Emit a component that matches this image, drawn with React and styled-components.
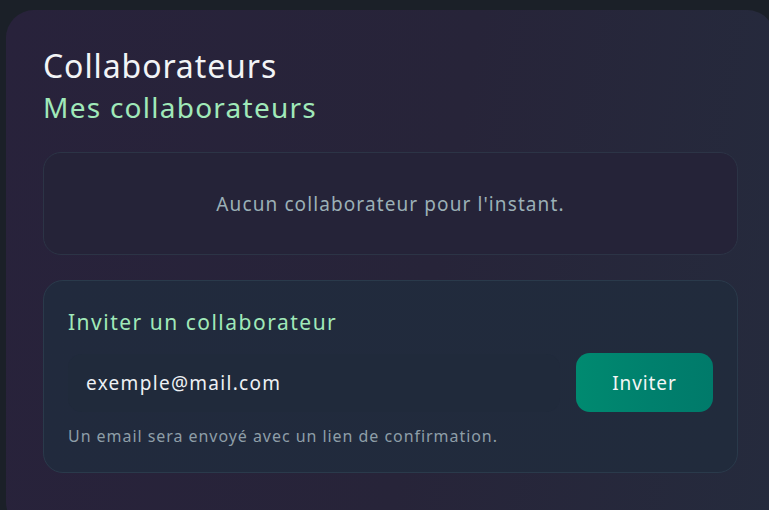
import React from "react";
import styled, { createGlobalStyle } from "styled-components";

const Global = createGlobalStyle`
  html, body { margin: 0; padding: 0; background: #1b2028; overflow: hidden; }
  body { font-family: "Noto Sans", "Open Sans", sans-serif; width: 769px; height: 510px; }
  * { box-sizing: border-box; }
`;

const Page = styled.div`
  padding: 10px 0 0 6px;
  width: 769px;
  height: 510px;
`;

const Card = styled.section`
  width: 769px;
  height: 520px;
  border-radius: 28px;
  background: linear-gradient(100deg, #28223b 0%, #272439 55%, #252b3d 100%);
  padding: 36px 37px 37px 37px;
  display: flex;
  flex-direction: column;
`;

const Title = styled.h1`
  margin: 0;
  font-weight: 400;
  font-size: 32px;
  line-height: 40px;
  color: #f2f4f6;
  letter-spacing: 0.9px;
`;

const Subtitle = styled.h2`
  margin: 3px 0 0 0;
  font-weight: 400;
  font-size: 28px;
  line-height: 36px;
  color: #a0e9b9;
  letter-spacing: 1.25px;
`;

const Empty = styled.div`
  margin-top: 27px;
  height: 103px;
  border-radius: 18px;
  border: 1px solid #2c3446;
  background: #252338;
  display: flex;
  align-items: center;
  justify-content: center;
  color: #9bb0b6;
  font-size: 19px;
  letter-spacing: 1.1px;
`;

const Invite = styled.div`
  margin-top: 25px;
  height: 193px;
  border-radius: 20px;
  border: 1px solid #2a3a4b;
  background: linear-gradient(100deg, #212a3d 0%, #212b3c 100%);
  padding: 27px 24px 24px 24px;
  display: flex;
  flex-direction: column;
`;

const InviteTitle = styled.h3`
  margin: 0;
  font-weight: 400;
  font-size: 21px;
  line-height: 28px;
  color: #a0e9b9;
  letter-spacing: 1.5px;
`;

const Row = styled.div`
  margin-top: 17px;
  display: flex;
  align-items: center;
  gap: 16px;
`;

const Input = styled.input`
  flex: 1;
  height: 58px;
  border: none;
  outline: none;
  border-radius: 14px;
  background: #202a3b;
  color: #eef1f4;
  font-family: inherit;
  font-size: 19px;
  letter-spacing: 1.3px;
  padding: 0 18px;
  &::placeholder { color: #eef1f4; }
`;

const Button = styled.button`
  width: 137px;
  height: 59px;
  border: none;
  border-radius: 14px;
  background: linear-gradient(90deg, #008a70 0%, #00806d 55%, #007a6a 100%);
  color: #f3f6f5;
  font-family: inherit;
  font-size: 19px;
  letter-spacing: 0.9px;
  cursor: pointer;
`;

const Hint = styled.p`
  margin: 13px 0 0 0;
  font-size: 16px;
  line-height: 22px;
  color: #8e9ea8;
  letter-spacing: 0.95px;
`;

export default function App() {
  return (
    <>
      <Global />
      <Page>
        <Card>
          <Title>Collaborateurs</Title>
          <Subtitle>Mes collaborateurs</Subtitle>
          <Empty>Aucun collaborateur pour l'instant.</Empty>
          <Invite>
            <InviteTitle>Inviter un collaborateur</InviteTitle>
            <Row>
              <Input type="email" placeholder="exemple@mail.com" />
              <Button>Inviter</Button>
            </Row>
            <Hint>Un email sera envoyé avec un lien de confirmation.</Hint>
          </Invite>
        </Card>
      </Page>
    </>
  );
}
